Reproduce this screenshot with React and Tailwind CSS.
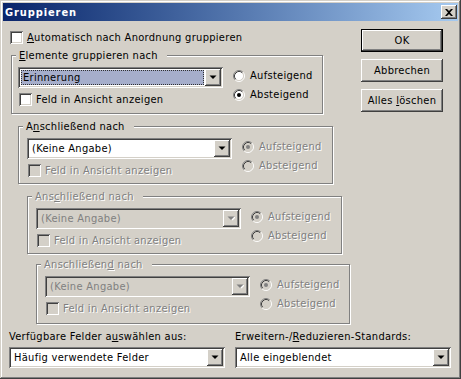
import React from "react"

const SUNKEN =
  "shadow-[inset_1px_1px_#808080,inset_-1px_-1px_#ffffff,inset_2px_2px_#404040,inset_-2px_-2px_#d4d0c8]"
const RAISED =
  "shadow-[inset_-1px_-1px_#404040,inset_1px_1px_#ffffff,inset_-2px_-2px_#808080,inset_2px_2px_#d4d0c8]"
const DISABLED_TEXT = "text-[#808080] [text-shadow:1px_1px_#ffffff]"

function Label({ children, disabled }) {
  return <span className={`whitespace-nowrap ${disabled ? DISABLED_TEXT : "text-black"}`}>{children}</span>
}

function CheckBox({ disabled }) {
  return <div className={`w-[13px] h-[13px] shrink-0 ${SUNKEN} ${disabled ? "bg-[#d4d0c8]" : "bg-white"}`} />
}

function Radio({ checked, disabled }) {
  return (
    <svg width="12" height="12" viewBox="0 0 12 12" className="shrink-0">
      <circle cx="6" cy="6" r="4.5" fill={disabled ? "#d4d0c8" : "#ffffff"} />
      <path d="M2.11 9.89 A5.5 5.5 0 0 1 9.89 2.11" fill="none" stroke="#808080" />
      <path d="M9.89 2.11 A5.5 5.5 0 0 1 2.11 9.89" fill="none" stroke="#ffffff" />
      <path d="M2.82 9.18 A4.5 4.5 0 0 1 9.18 2.82" fill="none" stroke="#404040" />
      <path d="M9.18 2.82 A4.5 4.5 0 0 1 2.82 9.18" fill="none" stroke="#d4d0c8" />
      {checked && <circle cx="6" cy="6" r="2" fill={disabled ? "#808080" : "#000000"} />}
    </svg>
  )
}

function DropButton({ disabled }) {
  return (
    <div className={`w-[16px] h-[17px] shrink-0 flex items-center justify-center bg-[#d4d0c8] ${RAISED}`}>
      <svg width="8" height="5" viewBox="0 0 8 5">
        {disabled && <path d="M2 1h7L5.5 4.5z" fill="#ffffff" />}
        <path d="M0.5 0.5h7L4 4z" fill={disabled ? "#808080" : "#000000"} />
      </svg>
    </div>
  )
}

function Combo({ value, width = "w-[205px]", disabled, selected }) {
  return (
    <div className={`${width} h-[21px] p-[2px] flex shrink-0 ${SUNKEN} ${disabled ? "bg-[#d4d0c8]" : "bg-white"}`}>
      <div
        className={`flex-1 flex items-center pl-[2px] m-[1px] ${
          selected ? "bg-[#a6aecb] outline-1 outline-dotted -outline-offset-1 outline-[#303030]" : ""
        }`}
      >
        <span className={`whitespace-nowrap ${disabled ? "text-[#808080]" : "text-black"}`}>{value}</span>
      </div>
      <DropButton disabled={disabled} />
    </div>
  )
}

function Button({ children, isDefault }) {
  return (
    <div
      className={`w-[82px] h-[23px] flex items-center justify-center bg-[#d4d0c8] ${
        isDefault ? "border border-black" : ""
      } ${RAISED}`}
    >
      <span className="whitespace-nowrap">{children}</span>
    </div>
  )
}

function Group({ title, titleDisabled, className, pad, comboDisabled, selected, value, radiosDisabled, checkDisabled, checkedFirst }) {
  return (
    <div
      className={`relative shrink-0 border border-[#808080] shadow-[inset_1px_1px_#ffffff,1px_1px_#ffffff] ${className}`}
    >
      <div className="absolute -top-[7px] left-[4px] bg-[#d4d0c8] pl-[3px] pr-[9px] leading-[13px]">
        <Label disabled={titleDisabled}>{title}</Label>
      </div>
      <div className={`flex pt-[11px] ${pad}`}>
        <div className="flex flex-col">
          <Combo value={value} disabled={comboDisabled} selected={selected} />
          <div className="flex items-center gap-[4px] mt-[5px] ml-[1px]">
            <CheckBox disabled={checkDisabled} />
            <Label disabled={checkDisabled}>Feld in Ansicht anzeigen</Label>
          </div>
        </div>
        <div className="flex flex-col gap-[6px] mt-[2px] ml-[10px]">
          <div className="flex items-center gap-[5px] h-[13px]">
            <Radio checked={checkedFirst} disabled={radiosDisabled} />
            <Label disabled={radiosDisabled}>Aufsteigend</Label>
          </div>
          <div className="flex items-center gap-[5px] h-[13px]">
            <Radio checked={!checkedFirst} disabled={radiosDisabled} />
            <Label disabled={radiosDisabled}>Absteigend</Label>
          </div>
        </div>
      </div>
    </div>
  )
}

export default function App() {
  return (
    <div
      className={`w-[461px] h-[379px] p-[3px] flex flex-col bg-[#d4d0c8] font-['DejaVu_Sans_Condensed','DejaVu_Sans',sans-serif] text-[11px] leading-[13px] tracking-[0.3px] text-black shadow-[inset_-1px_-1px_#404040,inset_1px_1px_#d4d0c8,inset_-2px_-2px_#808080,inset_2px_2px_#ffffff]`}
    >
      {/* Title bar */}
      <div className="h-[18px] flex items-center justify-between pl-[2px] pr-[1px] bg-gradient-to-r from-[#0a246a] to-[#a6caf0]">
        <span className="text-white font-bold tracking-[0.9px]">Gruppieren</span>
        <div className={`w-[16px] h-[14px] flex items-center justify-center bg-[#d4d0c8] ${RAISED}`}>
          <svg width="8" height="7" viewBox="0 0 8 7">
            <path d="M0 0h2l2 2 2-2h2L5 3.5 8 7H6L4 5 2 7H0l3-3.5z" fill="#000000" />
          </svg>
        </div>
      </div>

      {/* Body */}
      <div className="flex flex-col pl-[6px] pt-[8px]">
        <div className="flex items-start">
          <div className="w-[341px] ml-[1px] pt-[2px] flex flex-col">
            <div className="flex items-center gap-[4px] h-[13px]">
              <CheckBox />
              <Label>
                <span className="underline">A</span>utomatisch nach Anordnung gruppieren
              </Label>
            </div>

            <Group
              className="ml-[1px] mt-[11px] w-[312px] h-[59px]"
              pad="pl-[6px]"
              title={<><span className="underline">E</span>lemente gruppieren nach</>}
              value="Erinnerung"
              selected
            />
            <Group
              className="ml-[8px] mt-[12px] w-[315px] h-[58px]"
              pad="pl-[8px]"
              title={<>A<span className="underline">n</span>schließend nach</>}
              value="(Keine Angabe)"
              radiosDisabled
              checkDisabled
              checkedFirst
            />
            <Group
              className="ml-[17px] mt-[12px] w-[315px] h-[58px]"
              pad="pl-[8px]"
              title={<>Ans<span className="underline">c</span>hließend nach</>}
              titleDisabled
              value="(Keine Angabe)"
              comboDisabled
              radiosDisabled
              checkDisabled
              checkedFirst
            />
            <Group
              className="ml-[26px] mt-[10px] w-[314px] h-[60px]"
              pad="pl-[8px]"
              title={<>Anschließen<span className="underline">d</span> nach</>}
              titleDisabled
              value="(Keine Angabe)"
              comboDisabled
              radiosDisabled
              checkDisabled
              checkedFirst
            />
          </div>

          <div className="flex flex-col gap-[7px] ml-[10px]">
            <Button isDefault>OK</Button>
            <Button>Abbrechen</Button>
            <Button>
              Alles <span className="underline">l</span>öschen
            </Button>
          </div>
        </div>

        {/* Bottom selectors */}
        <div className="flex gap-[10px] mt-[6px]">
          <div className="flex flex-col gap-[4px]">
            <Label>
              Verfügbare Felder a<span className="underline">u</span>swählen aus:
            </Label>
            <Combo value="Häufig verwendete Felder" width="w-[216px]" />
          </div>
          <div className="flex flex-col gap-[4px]">
            <Label>
              Erweitern-/<span className="underline">R</span>eduzieren-Standards:
            </Label>
            <Combo value="Alle eingeblendet" width="w-[216px]" />
          </div>
        </div>
      </div>
    </div>
  )
}
